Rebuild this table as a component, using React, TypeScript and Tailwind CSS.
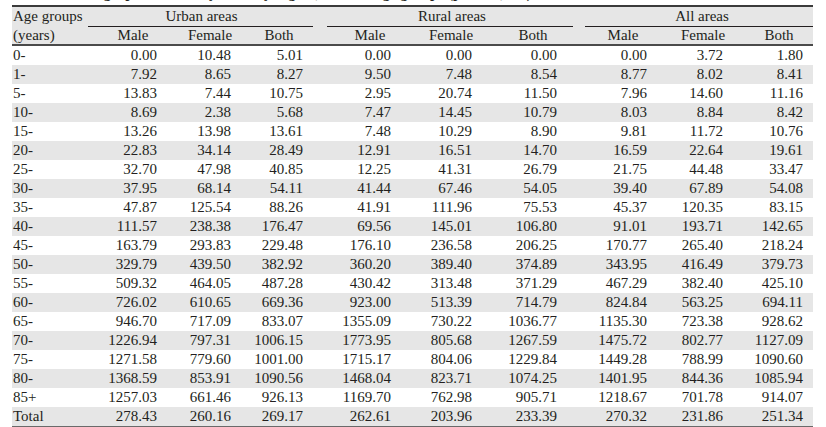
import React from "react";

const rows: [string, string[]][] = [
  ["0-", ["0.00", "10.48", "5.01", "0.00", "0.00", "0.00", "0.00", "3.72", "1.80"]],
  ["1-", ["7.92", "8.65", "8.27", "9.50", "7.48", "8.54", "8.77", "8.02", "8.41"]],
  ["5-", ["13.83", "7.44", "10.75", "2.95", "20.74", "11.50", "7.96", "14.60", "11.16"]],
  ["10-", ["8.69", "2.38", "5.68", "7.47", "14.45", "10.79", "8.03", "8.84", "8.42"]],
  ["15-", ["13.26", "13.98", "13.61", "7.48", "10.29", "8.90", "9.81", "11.72", "10.76"]],
  ["20-", ["22.83", "34.14", "28.49", "12.91", "16.51", "14.70", "16.59", "22.64", "19.61"]],
  ["25-", ["32.70", "47.98", "40.85", "12.25", "41.31", "26.79", "21.75", "44.48", "33.47"]],
  ["30-", ["37.95", "68.14", "54.11", "41.44", "67.46", "54.05", "39.40", "67.89", "54.08"]],
  ["35-", ["47.87", "125.54", "88.26", "41.91", "111.96", "75.53", "45.37", "120.35", "83.15"]],
  ["40-", ["111.57", "238.38", "176.47", "69.56", "145.01", "106.80", "91.01", "193.71", "142.65"]],
  ["45-", ["163.79", "293.83", "229.48", "176.10", "236.58", "206.25", "170.77", "265.40", "218.24"]],
  ["50-", ["329.79", "439.50", "382.92", "360.20", "389.40", "374.89", "343.95", "416.49", "379.73"]],
  ["55-", ["509.32", "464.05", "487.28", "430.42", "313.48", "371.29", "467.29", "382.40", "425.10"]],
  ["60-", ["726.02", "610.65", "669.36", "923.00", "513.39", "714.79", "824.84", "563.25", "694.11"]],
  ["65-", ["946.70", "717.09", "833.07", "1355.09", "730.22", "1036.77", "1135.30", "723.38", "928.62"]],
  ["70-", ["1226.94", "797.31", "1006.15", "1773.95", "805.68", "1267.59", "1475.72", "802.77", "1127.09"]],
  ["75-", ["1271.58", "779.60", "1001.00", "1715.17", "804.06", "1229.84", "1449.28", "788.99", "1090.60"]],
  ["80-", ["1368.59", "853.91", "1090.56", "1468.04", "823.71", "1074.25", "1401.95", "844.36", "1085.94"]],
  ["85+", ["1257.03", "661.46", "926.13", "1169.70", "762.98", "905.71", "1218.67", "701.78", "914.07"]],
  ["Total", ["278.43", "260.16", "269.17", "262.61", "203.96", "233.39", "270.32", "231.86", "251.34"]],
];

const grid =
  "grid grid-cols-[76px_90px_64px_74px_11px_86px_76px_88px_8px_76px_84px_68px]";

const pads = [
  "pr-[21px]",
  "pr-[11px]",
  "pr-[13px]",
  "pr-[22px]",
  "pr-[17px]",
  "pr-[20px]",
  "pr-[14px]",
  "pr-[22px]",
  "pr-[10px]",
];

function DataCells({ vals }: { vals: string[] }) {
  const cells: React.ReactNode[] = [];
  vals.forEach((v, i) => {
    if (i === 3 || i === 6) cells.push(<div key={"g" + i} />);
    cells.push(
      <div key={i} className={"text-right " + pads[i]}>
        {v}
      </div>
    );
  });
  return <>{cells}</>;
}

export default function App() {
  const sub = ["Male", "Female", "Both"];
  return (
    <div
      className="w-[826px] h-[427px] bg-white text-[#231f20] overflow-hidden"
      style={{ fontFamily: '"Liberation Serif", "Times New Roman", serif' }}
    >
      <div className="h-[5px] overflow-hidden pl-[12px]">
        <div className="-mt-[15px] font-bold text-[15px] leading-[16px] whitespace-nowrap">
          Table 2. Demographic mortality rates by region, sex and age groups (per 100,000)
        </div>
      </div>
      <div className="ml-[12px] w-[801px] text-[15px] leading-[19px]">
        <div className="border-t-2 border-[#3b3b3b] bg-[#e6e6e6]">
          <div className={grid + " h-[19px]"}>
            <div className="pl-[1px]">Age groups</div>
            <div className="col-span-3 mr-[3px] border-b border-[#231f20] text-center pl-[2px]">
              Urban areas
            </div>
            <div />
            <div className="col-span-3 mr-[4px] border-b border-[#231f20] text-center pl-[4px]">
              Rural areas
            </div>
            <div />
            <div className="col-span-3 border-b border-[#231f20] text-center pl-[6px]">
              All areas
            </div>
          </div>
          <div className={grid + " h-[20px] border-b-2 border-[#4a4a4a]"}>
            <div className="pl-[1px]">(years)</div>
            {sub.map((s) => (
              <div key={"u" + s} className="text-center">
                {s}
              </div>
            ))}
            <div />
            {sub.map((s) => (
              <div key={"r" + s} className="text-center">
                {s}
              </div>
            ))}
            <div />
            {sub.map((s) => (
              <div key={"a" + s} className="text-center">
                {s}
              </div>
            ))}
          </div>
        </div>
        <div className="border-b-[3px] border-[#6a6a6a]">
          {rows.map(([label, vals], idx) => (
            <div
              key={label}
              className={
                grid + " h-[19px] " + (idx % 2 === 1 ? "bg-[#e6e6e6]" : "bg-white")
              }
            >
              <div className="pl-[1px]">{label}</div>
              <DataCells vals={vals} />
            </div>
          ))}
        </div>
      </div>
    </div>
  );
}
